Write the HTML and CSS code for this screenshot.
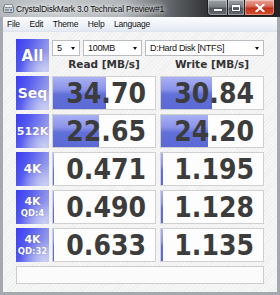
FILE: index.html
```html
<!DOCTYPE html>
<html>
<head>
<meta charset="utf-8">
<link rel="stylesheet" href="styles.css">
</head>
<body>
<div class="window">
  <div class="titlebar">
    <svg class="appicon" width="11" height="11" viewBox="0 0 11 11">
      <rect x="0.5" y="3.5" width="10" height="6" rx="1" fill="#c9ccd0" stroke="#6d7278"/>
      <rect x="1.5" y="1.5" width="8" height="3" rx="0.5" fill="#e9ecef" stroke="#8a8f95"/>
      <circle cx="8" cy="7" r="1" fill="#3a7bd5"/>
      <rect x="2" y="6.5" width="4" height="1" fill="#5a5f66"/>
    </svg>
    <span class="title">CrystalDiskMark 3.0 Technical Preview#1</span>
    <div class="winbtns">
      <span class="wb min"><i></i></span>
      <span class="wb max"><i></i></span>
      <span class="wb close">
        <svg width="10" height="8" viewBox="0 0 10 8"><path d="M1.5 0.8 L8.5 7.2 M8.5 0.8 L1.5 7.2" stroke="#fff" stroke-width="2.1" stroke-linecap="square"/></svg>
      </span>
    </div>
  </div>
  <div class="body">
    <div class="menubar">
      <span>File</span><span>Edit</span><span>Theme</span><span>Help</span><span>Language</span>
    </div>
    <div class="client">
      <div class="toprow">
        <div class="label all">All</div>
        <div class="controls">
          <div class="selects">
            <div class="select s-count"><span>5</span><i></i></div>
            <div class="select s-size"><span>100MB</span><i></i></div>
            <div class="select s-drive"><span>D:Hard Disk [NTFS]</span><i></i></div>
          </div>
          <div class="heads">
            <div class="head">Read [MB/s]</div>
            <div class="head">Write [MB/s]</div>
          </div>
        </div>
      </div>
      <div class="row">
        <div class="label seq">Seq</div>
        <div class="cell read" style="--w:53px">34.70</div>
        <div class="cell write" style="--w:51px">30.84</div>
      </div>
      <div class="row">
        <div class="label k512">512K</div>
        <div class="cell read" style="--w:46px">22.65</div>
        <div class="cell write" style="--w:47px">24.20</div>
      </div>
      <div class="row">
        <div class="label k4">4K</div>
        <div class="cell read" style="--w:1px">0.471</div>
        <div class="cell write" style="--w:2px">1.195</div>
      </div>
      <div class="row">
        <div class="label qd"><span class="l1">4K</span><span class="l2">QD:4</span></div>
        <div class="cell read" style="--w:1px">0.490</div>
        <div class="cell write" style="--w:2px">1.128</div>
      </div>
      <div class="row">
        <div class="label qd"><span class="l1">4K</span><span class="l2">QD:32</span></div>
        <div class="cell read" style="--w:1px">0.633</div>
        <div class="cell write" style="--w:2px">1.135</div>
      </div>
      <div class="status"></div>
    </div>
  </div>
</div>
</body>
</html>
```

FILE: styles.css
```css
* { box-sizing: border-box; }
html, body { margin: 0; padding: 0; }
body { width: 280px; height: 295px; overflow: hidden; background: #2a2b2d; }

.window {
  width: 280px;
  height: 295px;
  display: flex;
  flex-direction: column;
  background: #9ea4aa;
}

.titlebar {
  height: 17px;
  display: flex;
  align-items: center;
  background: linear-gradient(to right, #b3b8bd 0%, #c6cacd 20%, #b0b4b8 45%, #5d6064 62%, #2e3032 75%, #222324 100%);
  flex: none;
}
.appicon { margin-left: 3px; margin-top: -1px; flex: none; }
.title {
  margin-left: 2px;
  font-family: "Liberation Sans", Arial, sans-serif;
  font-size: 8.5px;
  letter-spacing: -0.2px;
  color: #111;
  text-shadow: 0 0 4px #fff, 0 0 6px rgba(255,255,255,.9);
  white-space: nowrap;
}
.winbtns {
  margin-left: auto;
  margin-right: 5px;
  align-self: flex-start;
  display: flex;
  height: 17px;
}
.wb {
  display: flex;
  align-items: center;
  justify-content: center;
  height: 16px;
  border: 1px solid #1d1f22;
  border-top: none;
  box-shadow: inset 0 0 0 1px rgba(255,255,255,.35);
}
.wb.min {
  width: 21px;
  border-radius: 0 0 0 4px;
  background: linear-gradient(to bottom, #9ea2a7 0%, #7b8086 45%, #54595f 55%, #656a70 100%);
}
.wb.min i { width: 8px; height: 2px; background: #fff; margin-top: 5px; box-shadow: 0 0 1px #000; }
.wb.max {
  width: 17px;
  border-left: none;
  background: linear-gradient(to bottom, #9ea2a7 0%, #7b8086 45%, #54595f 55%, #656a70 100%);
}
.wb.max i { width: 8px; height: 6px; border: 1px solid #fff; border-top-width: 2px; box-shadow: 0 0 1px #000; }
.wb.close {
  width: 30px;
  border-left: none;
  border-radius: 0 0 4px 0;
  background: linear-gradient(to bottom, #e9a496 0%, #d9705f 40%, #c1311b 55%, #d4502f 100%);
}

.body {
  flex: 1;
  display: flex;
  flex-direction: column;
  border-left: 3px solid #a3a9ae;
  border-right: 3px solid #a3a9ae;
  border-bottom: 3px solid #a3a9ae;
}

.menubar {
  height: 15px;
  flex: none;
  display: flex;
  align-items: center;
  gap: 9.5px;
  padding-left: 4px;
  background: linear-gradient(to bottom, #fbfcfe 0%, #eef2f8 60%, #e3e9f2 100%);
  border-bottom: 1px solid #dfe5ee;
  font-family: "Liberation Sans", Arial, sans-serif;
  font-size: 8.5px;
  letter-spacing: -0.2px;
  color: #111;
}

.client {
  flex: 1;
  padding: 7px 13px 0 13px;
  background: repeating-linear-gradient(135deg, #f6f6f6 0px, #f6f6f6 2px, #efefef 2px, #efefef 3px);
}

.toprow { display: flex; height: 33px; }
.controls { margin-left: 3px; display: flex; flex-direction: column; }
.selects { display: flex; gap: 3px; margin-top: 1px; height: 16px; }
.select {
  position: relative;
  height: 16px;
  background: #fff;
  border: 1px solid #b9bcc0;
  display: flex;
  align-items: center;
  padding-left: 4px;
  font-family: "Liberation Sans", Arial, sans-serif;
  font-size: 9px;
  letter-spacing: -0.3px;
  color: #111;
}
.select i {
  position: absolute;
  right: 4px;
  top: 6px;
  width: 0; height: 0;
  border-left: 2.5px solid transparent;
  border-right: 2.5px solid transparent;
  border-top: 3px solid #111;
}
.s-count { width: 28px; }
.s-size { width: 59px; }
.s-drive { width: 119px; }

.heads { display: flex; height: 16px; }
.head {
  width: 104px;
  text-align: center;
  line-height: 16px;
  font-family: "DejaVu Sans", Verdana, sans-serif;
  font-weight: bold;
  font-size: 10.5px;
  color: #333;
}
.head + .head { margin-left: 4px; }

.label {
  width: 33px;
  flex: none;
  display: flex;
  flex-direction: column;
  align-items: center;
  justify-content: center;
  color: #fff;
  font-family: "DejaVu Sans", Verdana, sans-serif;
  font-weight: bold;
  background:
    radial-gradient(ellipse 70% 60% at 85% 95%, rgba(215,220,245,.75) 0%, rgba(215,220,245,0) 100%),
    linear-gradient(110deg, #3b3cf3 0%, #5358ef 30%, #8a90ea 70%, #aab0ec 100%);
  text-shadow: 0 0 1px rgba(40,40,120,.5);
}
.label.all { height: 33px; font-size: 15px; }
.label.seq { font-size: 14px; }
.label.k512 { font-size: 11px; }
.label.k4 { font-size: 12px; }
.label.qd .l1 { font-size: 11px; line-height: 12px; }
.label.qd .l2 { font-size: 8.5px; line-height: 11px; }

.row { display: flex; height: 34px; margin-top: 4px; }
.cell {
  width: 104px;
  flex: none;
  border: 1px solid #cfd0d2;
  background-color: #fdfdfd;
  background-image: linear-gradient(to bottom, #aab1f2 0%, #8b94ea 38%, #6170d8 55%, #5a69d4 100%);
  background-size: var(--w) 100%;
  background-repeat: no-repeat;
  text-align: right;
  padding-right: 9px;
  padding-top: 1px;
  line-height: 32px;
  font-family: "DejaVu Sans Condensed", "DejaVu Sans", Verdana, sans-serif;
  font-stretch: condensed;
  font-weight: bold;
  font-size: 28px;
  color: #3c3c3c;
}
.cell.read { margin-left: 3px; }
.cell.write { margin-left: 4px; }

.status {
  margin-top: 4px;
  height: 18px;
  border: 1px solid #cbcccd;
  background: #fbfbfb;
}
```
